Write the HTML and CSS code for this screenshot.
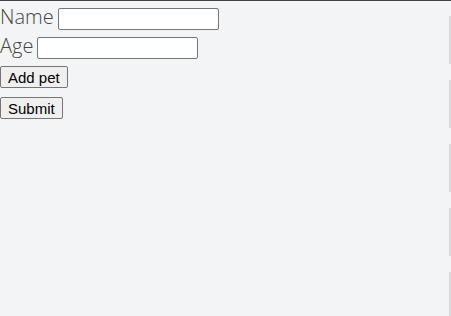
FILE: index.html
```html
<!DOCTYPE html>
<html lang="en">
  <head>
    <meta charset="UTF-8" />
    <meta name="viewport" content="width=device-width, initial-scale=1.0" />
    <title>Pets</title>
    <link rel="stylesheet" href="styles.css">
  </head>
  <body>
    <form class="pet-form">
      <div class="field">
        <label for="name">Name</label>
        <input type="text" id="name" />
      </div>
      <div class="field">
        <label for="age">Age</label>
        <input type="text" id="age" />
      </div>
      <div class="actions">
        <button type="button">Add pet</button>
      </div>
      <div class="actions">
        <button type="submit">Submit</button>
      </div>
    </form>
  </body>
</html>
```

FILE: styles.css
```css
html {
  background: #f3f4f6;
}
body {
  margin: 0;
  min-height: 316px;
  font-family: "Open Sans", sans-serif;
  font-weight: 300;
  color: #444;
  border-top: 1px solid #444;
  background:
    linear-gradient(#f5f6f7, #f3f4f6) top / 100% 12px no-repeat,
    repeating-linear-gradient(to bottom, transparent 0 15px, #d8d8da 15px 63px, transparent 63px 64px) right / 2px 100% no-repeat,
    #f3f4f6;
  box-sizing: border-box;
}
.pet-form {
  padding-top: 3px;
}
.field {
  display: flex;
  align-items: center;
  gap: 4px;
  height: 29px;
  font-size: 20px;
  line-height: 1;
}
.field label {
  margin-top: -3px;
}
.field input {
  width: 161px;
  height: 22px;
  box-sizing: border-box;
  border: 1px solid #767676;
  border-radius: 2px;
  background: white;
}
.actions {
  display: flex;
  margin-top: 4px;
}
.actions + .actions {
  margin-top: 9px;
}
.actions button {
  font-family: "Liberation Sans", Arial, sans-serif;
  font-size: 15px;
  height: 22px;
  padding: 0 7px;
  border: 1px solid #767676;
  border-radius: 2px;
  background: #efefef;
  color: #000;
}
```
